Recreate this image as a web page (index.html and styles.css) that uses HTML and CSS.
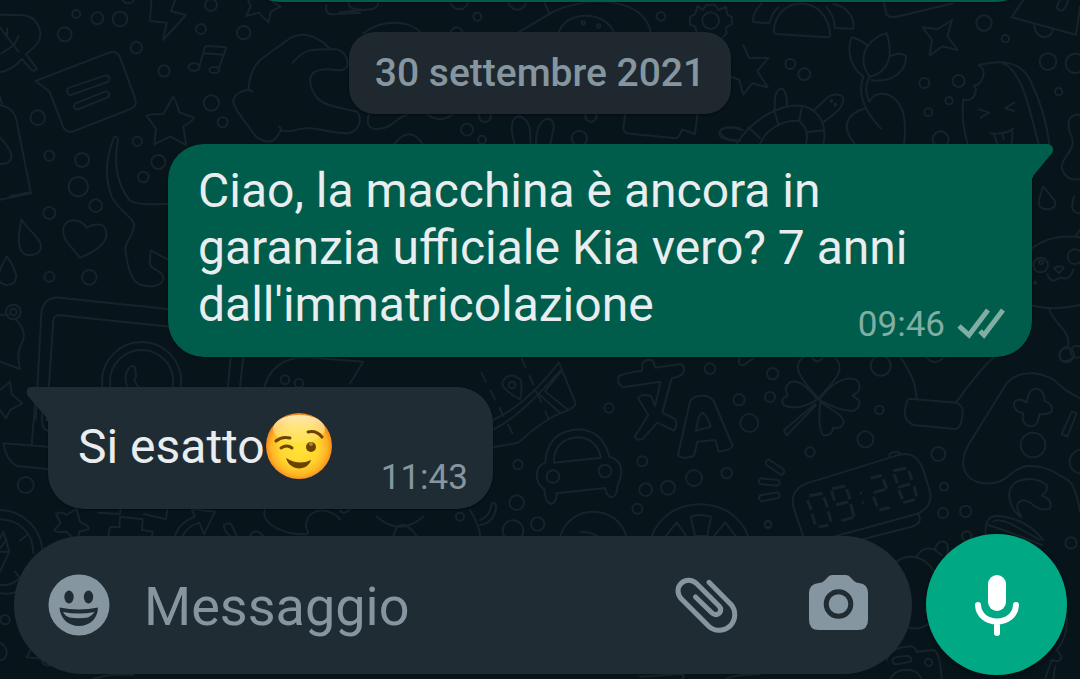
FILE: index.html
```html
<!DOCTYPE html>
<html lang="it">
<head>
    <meta charset="UTF-8">
    <meta name="viewport" content="width=device-width, initial-scale=1.0">
    <title>Chat</title>
    <link rel="stylesheet" href="styles.css">
</head>
<body>
    <!-- wallpaper doodles -->
    <svg class="wallpaper" viewBox="0 0 3240 2037" preserveAspectRatio="xMidYMid slice" aria-hidden="true">
        <!-- top left -->
        <g>
            <circle cx="229" cy="42" r="12"/><circle cx="292" cy="55" r="18"/><circle cx="360" cy="57" r="22"/>
            <circle cx="194" cy="103" r="21"/><circle cx="409" cy="143" r="17"/><circle cx="492" cy="213" r="17"/>
            <circle cx="603" cy="87" r="15"/><circle cx="633" cy="15" r="18"/><circle cx="731" cy="98" r="20"/>
            <circle cx="634" cy="309" r="23"/><circle cx="668" cy="367" r="15"/><circle cx="113" cy="353" r="22"/>
            <circle cx="148" cy="467" r="15"/><circle cx="246" cy="480" r="21"/><circle cx="412" cy="424" r="14"/>
            <circle cx="475" cy="486" r="21"/><circle cx="430" cy="531" r="16"/><circle cx="235" cy="560" r="29"/>
            <circle cx="385" cy="-10" r="20"/>
            <path d="M0 44L70 46C115 50 130 100 115 125C108 140 90 150 78 163L110 205Q103 218 93 208L66 177C50 195 30 212 0 216"/>
            <path d="M0 82L56 156M22 84L20 110M56 108L42 135L4 160"/>
            <path d="M106 243L330 157Q350 150 360 172L407 300Q410 318 392 327L220 394Q200 400 190 382L148 274Z"/>
            <path d="M208 263L314 227A9 9 0 0 1 322 246L216 284A9 9 0 0 1 208 263ZM227 310L314 275A9 9 0 0 1 322 293L236 327A9 9 0 0 1 227 310Z"/>
            <path d="M455 -10L450 63L500 68L489 120L558 45L513 34L529 -10"/>
            <path d="M598 200L614 143Q616 138 626 138L679 142L655 210M612 160L670 164"/>
            <ellipse cx="582" cy="201" rx="17" ry="11"/><ellipse cx="643" cy="210" rx="15" ry="9"/>
            <path d="M519 291Q524 290 538 337L580 352Q588 356 550 380L559 435L511 410L463 433L468 386L440 348Q440 342 490 342Z"/>
            <path d="M742 -5L752 18L739 48L776 38L806 68L812 35L842 20L810 0"/>
            <path d="M980 15Q972 44 1000 43L1080 38M1046 0Q1040 30 1080 28"/>
            <path d="M745 268C750 210 770 185 800 165L860 122C900 90 950 105 988 144M878 188C910 150 925 145 1010 148C1040 155 1050 195 1037 205C1010 222 990 195 945 215C920 230 930 270 955 297C975 317 1010 320 1070 335C1085 350 1085 385 1050 399C990 405 940 370 880 392L840 393M757 274C740 262 700 280 700 305C702 330 730 355 755 393C775 425 815 435 830 410C840 398 848 385 837 379"/>
            <path d="M0 316C30 320 48 340 52 375L93 580L0 599M0 412C25 440 40 460 32 480Q25 493 0 492M0 290L6 312M30 589L90 577"/>
            <path d="M342 412Q350 405 354 418C340 490 350 550 388 600C400 612 440 615 503 611M342 412C310 490 320 550 335 590C355 630 395 650 402 670C405 705 375 720 376 750C382 800 395 850 425 855C455 862 485 860 490 835C492 810 450 810 449 790L452 752L503 778"/>
        </g>
        <!-- left middle -->
        <g transform="translate(0 540)">
            <circle cx="148" cy="99" r="18"/><circle cx="287" cy="77" r="19"/><circle cx="148" cy="290" r="15"/><circle cx="268" cy="292" r="22"/>
            <path d="M64 118C50 190 55 225 90 226Q130 220 121 190C115 170 80 145 64 118ZM21 230C0 262 -8 290 0 306Q15 320 35 312Q50 305 48 285Q40 255 21 230Z"/>
            <path d="M240 233L200 185C180 150 190 122 222 121Q245 122 260 143Q285 128 310 137Q332 165 304 195Q280 218 240 233Z"/>
            <circle cx="40" cy="396" r="22"/><circle cx="40" cy="396" r="10"/>
            <path d="M0 404L24 404M46 418C80 450 75 475 60 500Q50 530 60 567L0 545"/>
            <path d="M107 720L124 400Q130 350 180 353L510 388M140 720L160 420Q162 405 180 406L510 440"/>
            <circle cx="425" cy="605" r="119"/><circle cx="425" cy="605" r="95"/>
            <path d="M380 575Q395 550 405 562L408 590Q395 600 420 625L455 660L440 680C405 665 365 620 380 575"/>
            <path d="M692 530L682 640M730 530L718 640M790 640C800 560 860 530 920 532L1090 545L1050 610"/>
            <circle cx="855" cy="599" r="13"/><circle cx="897" cy="610" r="13"/>
            <path d="M0 630L30 605L35 643L67 670L30 690L18 715L0 690"/>
            <path d="M107 650L95 795M10 790L144 800M10 790Q18 840 50 858L150 868M128 690Q120 750 145 752"/>
            <circle cx="77" cy="915" r="24"/>
        </g>
        <!-- behind the date chip -->
        <g transform="translate(1020 0)">
            <circle cx="412" cy="50" r="12"/><circle cx="963" cy="49" r="13"/><circle cx="381" cy="389" r="18"/><circle cx="426" cy="419" r="12"/>
            <circle cx="718" cy="415" r="23"/><circle cx="435" cy="348" r="18"/><circle cx="753" cy="348" r="17"/><circle cx="532" cy="2" r="27"/>
            <circle cx="358" cy="0" r="28"/><circle cx="350" cy="100" r="18"/>
            <path d="M0 37L100 27Q118 18 115 0M70 100C120 60 205 55 245 100M530 100L640 35C760 -20 920 0 932 100M610 0L628 40M655 100C675 30 800 30 822 100"/>
            <circle cx="730" cy="68" r="5"/><circle cx="776" cy="78" r="5"/>
            <circle cx="1112" cy="62" r="25"/>
            <path d="M1072 18L1088 30L1100 14L1124 14L1136 30L1158 20L1162 44L1176 52V72L1158 82L1160 100L1148 112M1072 18L1066 42L1050 50V74L1066 80L1070 100"/>
            <path d="M86 345Q75 385 110 388C160 385 170 350 200 345M160 435Q210 370 250 435M265 345Q300 370 335 345M525 435C490 330 560 330 570 390L572 435M588 435C585 340 650 340 640 390L630 435"/>
            <path d="M855 345L850 385Q852 400 870 401L1008 415Q1020 410 1026 388L1065 402L1072 345M1200 385Q1150 375 1140 395Q1145 420 1200 422"/>
        </g>
        <!-- top right -->
        <g transform="translate(2100 0)">
            <circle cx="271" cy="192" r="15"/><circle cx="313" cy="223" r="18"/><circle cx="673" cy="249" r="15"/><circle cx="776" cy="243" r="18"/>
            <circle cx="747" cy="302" r="11"/><circle cx="685" cy="337" r="12"/><circle cx="722" cy="418" r="24"/><circle cx="852" cy="69" r="23"/>
            <circle cx="916" cy="116" r="11"/><circle cx="1044" cy="185" r="25"/><circle cx="1126" cy="190" r="29"/><circle cx="1076" cy="275" r="11"/>
            <path d="M221 98C225 -20 385 -20 391 108Q390 112 370 111L228 102ZM185 10Q155 40 160 66L208 70Q215 40 235 22M378 20Q405 50 404 84L460 86C465 50 440 20 400 12"/>
            <path d="M550 0L560 45Q570 55 600 48L760 10"/>
            <path d="M668 82L712 88L756 60L742 108L773 150L727 139L689 166L696 120Z"/>
            <path d="M130 135L148 175L206 173L172 213L203 262L156 250L130 284L118 240L92 230"/>
            <path d="M490 230C450 200 440 150 455 112Q485 120 503 138Q530 105 560 100C580 160 570 215 510 230C485 200 485 165 503 138M572 168Q600 155 618 168C620 210 580 250 515 240"/>
            <path d="M490 230C475 270 480 320 543 386M510 230C490 260 500 285 508 305C530 260 600 280 612 350Q618 395 612 432M497 325C440 340 420 380 465 432"/>
            <path d="M110 432C160 350 250 310 310 318C370 335 380 390 370 432M180 432C200 385 250 360 295 362Q330 385 318 432M145 382L180 415M222 330L234 370M306 320L298 362M324 396L372 391M225 328C220 280 235 260 250 268Q263 285 260 318M340 332L385 290Q420 275 430 295C430 330 395 345 368 368M128 390C80 375 50 385 60 408Q80 425 115 422"/>
            <circle cx="394" cy="303" r="3"/><circle cx="406" cy="314" r="3"/>
            <path d="M836 195C900 180 960 180 990 240Q1035 330 1048 432M905 188C970 210 990 340 1016 432M836 195Q860 210 845 240Q835 258 822 256Q835 275 818 294Q805 305 790 298Q782 360 803 432"/>
            <path d="M836 328L868 338L842 353M943 308L915 325L943 333M870 400Q915 405 940 386M882 404L892 432M936 392Q940 420 932 432M908 404L912 418"/>
            <path d="M970 0L935 52L1128 104L1140 20M1003 75Q1005 110 1035 112Q1055 108 1058 92M1080 0Q1060 30 1085 32Q1100 25 1104 0"/>
            <path d="M1140 345C1100 340 1100 380 1115 410C1130 450 1085 470 1085 500Q1095 545 1140 537"/>
            <path d="M1030 560C1010 610 1010 625 1040 628Q1075 625 1063 600ZM1122 590Q1105 640 1140 640"/>
        </g>
        <!-- bear, right edge -->
        <g transform="translate(2520 390)">
            <path d="M570 360Q630 310 720 322M705 320L720 300M570 525Q640 545 720 525M628 540C650 590 690 600 685 648Q650 660 662 690Q685 700 700 680M622 433Q635 465 660 442Q690 455 700 418M642 415Q655 405 672 412L657 430Z"/>
            <circle cx="602" cy="405" r="22"/><circle cx="705" cy="380" r="22"/><circle cx="603" cy="397" r="6"/><circle cx="586" cy="458" r="3"/><circle cx="710" cy="665" r="18"/>
        </g>
        <!-- map, car, translate -->
        <g transform="translate(1440 1050)">
            <circle cx="387" cy="174" r="14"/><circle cx="690" cy="56" r="16"/><circle cx="777" cy="149" r="17"/><circle cx="808" cy="219" r="27"/>
            <circle cx="487" cy="334" r="15"/><circle cx="740" cy="369" r="16"/><circle cx="642" cy="384" r="24"/><circle cx="564" cy="413" r="21"/>
            <circle cx="497" cy="419" r="19"/><circle cx="472" cy="476" r="15"/><circle cx="114" cy="344" r="14"/><circle cx="110" cy="458" r="22"/>
            <circle cx="173" cy="522" r="20"/><circle cx="99" cy="542" r="31"/><circle cx="864" cy="522" r="10"/>
            <path d="M38 210C110 180 180 110 237 38L287 160Q285 175 240 190Q190 210 115 278L38 292M38 240C110 205 190 120 240 62M165 122L240 188M195 124L265 180M195 124L245 62"/>
            <path class="dashed" d="M5 70L110 275M125 25L205 205"/>
            <path d="M120 148Q60 115 68 95Q90 60 122 90Q128 120 120 148Z"/><circle cx="96" cy="105" r="10"/>
            <path d="M486 62L488 38Q505 22 520 34L526 53L600 42Q615 45 612 62Q610 80 575 85L547 188L585 207Q595 220 582 242L532 218L490 265Q470 275 464 260L505 195L474 145Q480 130 512 137L525 168L542 95L430 112Q412 105 415 80Q425 70 486 62Z"/>
            <path d="M594 315L630 155Q640 135 680 138Q700 145 705 162L758 288Q755 300 716 305L706 270L652 275L642 318Q605 330 594 315ZM648 242Q655 190 668 188Q680 195 692 230Z"/>
            <path d="M196 338C200 270 240 240 300 238Q370 245 388 320C430 330 430 370 413 405Q410 442 395 442Q380 440 375 414L230 430Q230 460 212 462Q195 455 193 418C165 400 160 350 196 338ZM222 338C220 280 260 262 300 262Q350 268 363 323Z"/>
            <circle cx="219" cy="380" r="19"/><circle cx="375" cy="363" r="19"/>
            <path d="M240 560C270 460 410 460 440 560M303 545L330 548L360 562M515 560C560 430 760 430 805 560M632 500Q660 490 693 500L682 558H645ZM556 560L590 517L620 560M700 560L736 517L768 560M0 510Q30 500 35 460Q50 455 48 475Q40 520 0 525"/>
            <path d="M866 328L910 357Q918 368 904 375L860 345Q852 333 866 328ZM842 385L895 390Q905 400 892 407L842 402Q830 395 842 385ZM840 436L893 427Q904 435 895 444L845 454Q832 448 840 436ZM780 22Q770 45 790 46L820 25"/>
        </g>
        <!-- clover, clock, gamepad -->
        <g transform="translate(2340 1050)">
            <circle cx="302" cy="47" r="30"/><circle cx="298" cy="180" r="13"/><circle cx="256" cy="268" r="24"/><circle cx="90" cy="306" r="14"/>
            <circle cx="475" cy="312" r="21"/><circle cx="492" cy="410" r="12"/><circle cx="489" cy="489" r="15"/><circle cx="557" cy="484" r="17"/>
            <circle cx="560" cy="558" r="14"/><circle cx="-22" cy="71" r="17"/><circle cx="-30" cy="141" r="15"/><circle cx="860" cy="15" r="22"/>
            <path d="M115 145C70 95 30 50 70 22M115 145C165 90 200 60 165 22M95 22Q110 45 130 22M112 148C70 90 30 80 17 115Q20 130 22 138Q0 145 10 165C40 180 80 170 112 148ZM118 150C150 100 200 75 230 90Q245 105 235 125L218 137L238 152Q240 180 215 183C180 182 150 165 118 150ZM120 155C170 190 195 200 190 220Q180 240 160 232Q155 260 130 255C115 240 118 200 120 155ZM105 162L12 240L20 256L108 165"/>
            <path d="M362 22C400 80 405 100 410 146M640 22Q590 70 528 158M388 146L528 158Q550 165 548 190Q545 235 525 237L400 225Q370 210 375 185Q378 150 388 146ZM440 22Q465 50 490 22"/>
            <path d="M680 100C720 55 800 60 850 115Q870 130 900 145M680 100L565 285C530 350 560 395 610 400C690 405 680 360 740 348C800 345 830 370 870 395Q890 420 900 485"/>
            <path d="M740 158Q745 115 770 116Q795 120 793 152Q820 160 815 185Q800 195 778 192Q775 230 750 229Q722 222 730 190Q700 185 702 158Q715 140 740 158ZM875 185L890 190L862 260L845 252Z"/>
            <circle cx="759" cy="285" r="37"/><circle cx="905" cy="335" r="36"/>
            <path d="M70 560L40 470Q30 420 80 400L340 320C390 300 415 320 430 360L450 425Q460 470 410 492L160 560M328 320Q325 305 355 306L362 314M415 492Q430 520 395 530L240 570"/>
            <path class="digits" d="M88 437L128 430M82 450L94 480M132 442L142 472M96 492L106 524M145 484L153 515M115 532L145 525M156 416L195 408M154 422L164 452M200 418L210 448M168 464L205 456M212 462L222 500M185 512L220 502M272 384L306 376M310 388L320 416M280 428L316 418M280 440L292 470M298 480L330 472M340 362L378 354M342 372L352 400M386 362L396 390M354 412L390 402M356 420L368 448M402 408L410 440M370 458L405 448M240 428L246 430M246 456L252 458"/>
            <path d="M725 502C690 480 670 420 710 395Q760 375 800 405Q805 425 785 436Q820 450 810 475Q785 485 760 465Q730 440 714 460Q705 470 725 502ZM618 560Q610 500 650 497Q740 505 790 570M640 515Q650 505 690 520L780 570"/>
        </g>
        <!-- strip above and below the composer -->
        <g transform="translate(0 1500)">
            <circle cx="15" cy="359" r="14"/>
            <path d="M0 30C60 30 130 80 128 170M0 58C60 60 100 100 100 160M60 122L80 106M45 215L60 235M0 280Q50 285 70 262M0 255Q40 258 60 232M10 95L0 115M10 95L28 155L0 215M0 155H28M0 145L20 118M0 428Q22 440 20 462Q15 480 0 481M95 445L80 472L170 480M125 480Q130 500 150 496"/>
            <path d="M168 42Q185 32 200 45L230 27L240 66Q270 78 265 88L238 95L235 110M168 42L182 68L163 90Q165 98 200 95L215 110"/>
            <path d="M295 38L360 42L362 27M325 108L330 80L358 82L360 50L428 58L426 90L458 95L456 108M432 42L498 58L502 27M525 108Q535 70 585 50L575 28L645 35L612 103L598 68Q560 80 548 108M672 75Q685 65 695 75L710 108M672 75Q670 90 690 108M750 108Q765 80 790 108M795 27C780 70 850 105 920 103M1020 58C990 20 920 20 918 80L925 100M280 537Q330 520 400 525"/>
            <path d="M1130 50Q1200 110 1270 50M1180 108Q1200 40 1250 108M1020 30Q1030 50 1060 20M1410 30Q1440 80 1440 108"/>
            <circle cx="1380" cy="50" r="12"/>
        </g>
        <g transform="translate(1920 1560)">
            <circle cx="384" cy="14" r="10"/><circle cx="980" cy="48" r="14"/><circle cx="1293" cy="69" r="17"/><circle cx="866" cy="427" r="11"/>
            <path d="M770 125C800 100 850 105 880 150M830 110Q850 75 885 90L905 105M885 90Q890 60 915 65Q930 80 920 105M800 320Q830 335 870 310M1280 290Q1285 350 1250 390L1265 410Q1262 430 1235 420L1215 477M740 420Q750 385 800 380Q825 375 830 395L880 390Q900 395 905 477M758 425Q755 412 775 410L805 407Q818 415 812 425L775 432Q760 435 758 425ZM750 477C770 440 830 440 845 477M0 470L120 462Q140 465 125 477M260 477Q270 465 360 463"/>
            <path d="M1045 15Q1150 50 1205 75M1240 477L1245 440"/>
        </g>
    </svg>

    <div class="chat">
        <main class="messages">
            <div class="bubble sent previous"></div>
            <div class="date">30 settembre 2021</div>
            <article class="bubble sent first">
                <svg class="tail" width="22" height="34" viewBox="0 0 22 34" aria-hidden="true"><path d="M0 0H15C20 0 23 5 20 9L1 32V34H0Z"/></svg>
                <span class="text">Ciao, la macchina è ancora in garanzia ufficiale Kia vero? 7 anni dall'immatricolazione</span>
                <span class="meta">
                    <time>09:46</time>
                    <svg class="checks" width="52" height="36" viewBox="0 0 52 36" role="img" aria-label="Consegnato">
                        <path d="M3 19L13 28L32 3M24 24L28 28L47 3"/>
                    </svg>
                </span>
            </article>
            <article class="bubble received">
                <svg class="tail" width="22" height="34" viewBox="0 0 22 34" aria-hidden="true"><path d="M22 0H5C0 0 0 6 2 9L21 31V34H22Z"/></svg>
                <span class="text">Si esatto<svg class="emoji" width="68" height="68" viewBox="0 0 68 68" role="img" aria-label="Occhiolino">
                        <defs>
                            <radialGradient id="face" cx="50%" cy="52%" r="50%">
                                <stop offset="0" stop-color="#ffe43a"/>
                                <stop offset="0.6" stop-color="#ffd52e"/>
                                <stop offset="0.85" stop-color="#ffb325"/>
                                <stop offset="1" stop-color="#f58a1c"/>
                            </radialGradient>
                            <linearGradient id="shine" x1="0" y1="0" x2="0" y2="1">
                                <stop offset="0" stop-color="#fff3c4" stop-opacity="0.9"/>
                                <stop offset="1" stop-color="#ffe97a" stop-opacity="0.35"/>
                            </linearGradient>
                        </defs>
                        <circle cx="34" cy="34" r="33" fill="url(#face)"/>
                        <ellipse cx="34" cy="17" rx="26" ry="14" fill="url(#shine)"/>
                        <g fill="none" stroke="#6b4200" stroke-linecap="round">
                            <path d="M11 29Q17 24 25 26" stroke-width="3"/>
                            <path d="M43 20Q51 18 57 25" stroke-width="3"/>
                            <path d="M16 36Q22 32 27 36" stroke-width="3"/>
                        </g>
                        <path d="M21 46Q34 54 46 48C43 59 25 60 21 46Z" fill="#6b4200"/>
                        <ellipse cx="46" cy="35" rx="5" ry="5" fill="#6b4200"/>
                        <circle cx="46" cy="32" r="2" fill="#a98240"/>
                    </svg></span>
                <span class="meta"><time>11:43</time></span>
            </article>
        </main>

        <form class="composer">
            <div class="field">
                <button type="button" class="icon" aria-label="Emoji">
                    <svg width="62" height="62" viewBox="0 0 62 62">
                        <circle cx="31" cy="31" r="30.5" fill="#8696a0"/>
                        <g fill="#202c33">
                            <ellipse cx="21" cy="23" rx="4.7" ry="6.4"/>
                            <ellipse cx="40.5" cy="23" rx="4.7" ry="6.4"/>
                            <path d="M11.500 33.500Q31 37.500 50 33.500C50 44 42 52 31 52C20 52 12 44 11.500 33.500Z"/>
                        </g>
                        <path d="M15 38Q31 41 46.500 38Q44 42 40 43.500Q31 45 21.500 43.500Q17 42 15 38Z" fill="#8696a0"/>
                    </svg>
                </button>
                <input type="text" placeholder="Messaggio" aria-label="Messaggio">
                <button type="button" class="icon attach" aria-label="Allega">
                    <svg width="64" height="64" viewBox="0 0 64 64" fill="none" stroke="#8696a0" stroke-width="5" stroke-linecap="round" stroke-linejoin="round">
                        <path d="M34 9.3L56 31.500C61 37 61 46 56 52C50 58.500 40 59 34 53.500L6 25.500C2 21 2 14.500 6 10.500C10 6 17 6 21.500 10.500L44 33C46.500 35.500 46 38 44.500 40C42 42 39 42 36.500 39.500L20.500 24"/>
                    </svg>
                </button>
                <button type="button" class="icon" aria-label="Fotocamera">
                    <svg width="60" height="60" viewBox="0 2 60 60">
                        <path d="M23 2H37Q40 2 42 5L45 8Q47 10 50 10Q59 11 59 20V47Q59 57 49 57H10Q0 57 0 47V20Q0 11 10 10Q13 10 15 8L18 5Q20 2 23 2Z" fill="#8696a0"/>
                        <circle cx="29.500" cy="31" r="12.300" fill="#8696a0" stroke="#202c33" stroke-width="5"/>
                    </svg>
                </button>
            </div>
            <button type="button" class="mic" aria-label="Messaggio vocale">
                <svg width="60" height="64" viewBox="0 0 60 64" fill="none" stroke="#fff">
                    <rect x="21" y="2" width="18" height="36" rx="9" fill="#fff" stroke="none"/>
                    <path d="M11 32C12 54 48 54 49 32M30 49V60" stroke-width="6" stroke-linecap="round"/>
                </svg>
            </button>
        </form>
    </div>
</body>
</html>
```
FILE: styles.css
```css
* {
    box-sizing: border-box;
}
body {
    margin: 0;
    font-family: Roboto, sans-serif;
    background-color: #07141a;
    color: #e9edef;
}
.wallpaper {
    position: absolute;
    top: 0;
    left: 0;
    width: 100%;
    height: 100%;
    fill: none;
    stroke: #17232a;
    stroke-width: 6;
    stroke-linejoin: round;
    stroke-linecap: round;
}
.wallpaper .dashed {
    stroke-dasharray: 28 30;
}
.wallpaper .digits {
    stroke-width: 9;
    stroke-linecap: butt;
}
.chat {
    position: relative;
    display: flex;
    flex-direction: column;
    height: 100vh;
    overflow: hidden;
}
.messages {
    flex: 1;
    min-height: 0;
    display: flex;
    flex-direction: column;
    justify-content: flex-end;
    align-items: flex-start;
    gap: 30px;
    padding: 0 48px 25px;
}
.date {
    flex-shrink: 0;
    align-self: center;
    padding: 18px 26px;
    border-radius: 26px;
    background-color: #1e282e;
    box-shadow: 0 1px 2px rgba(0, 0, 0, 0.4);
    color: #8696a0;
    font-size: 39px;
    font-weight: 500;
    line-height: 46px;
}
.bubble {
    position: relative;
    display: flow-root;
    flex-shrink: 0;
    max-width: 80vw;
    padding: 18px 24px 24px 30px;
    border-radius: 36px;
    box-shadow: 0 1px 2px rgba(0, 0, 0, 0.4);
    font-size: 48px;
    line-height: 57px;
}
.sent {
    align-self: flex-end;
    background-color: #005d4b;
}
.first {
    border-top-right-radius: 0;
}
.previous {
    width: 73vw;
    min-height: 120px;
}
.received {
    padding: 31px 25px 34px 30px;
    border-top-left-radius: 0;
    background-color: #202c33;
}
.tail {
    position: absolute;
    top: 0;
}
.sent .tail {
    left: 100%;
    fill: #005d4b;
}
.received .tail {
    right: 100%;
    fill: #202c33;
}
.meta {
    float: right;
    display: flex;
    align-items: center;
    gap: 11px;
    margin: 28px 0 -24px 48px;
    color: #8696a0;
    font-size: 35px;
    line-height: 42px;
}
.sent .meta {
    color: #80aea5;
}
.received .meta {
    margin-top: 39px;
}
.checks {
    fill: none;
    stroke: #80aea5;
    stroke-width: 5;
}
.emoji {
    margin: -12px 0;
    vertical-align: -5px;
}
.composer {
    display: flex;
    align-items: center;
    gap: 14px;
    padding: 0 13px 4px 14px;
}
.field {
    flex: 1;
    min-width: 0;
    display: flex;
    align-items: center;
    height: 138px;
    padding: 0 43px 0 34px;
    border-radius: 69px;
    background-color: #202c33;
}
.field input {
    flex: 1;
    min-width: 0;
    margin: 0;
    padding: 4px 0 0 34px;
    border: none;
    outline: none;
    background: none;
    color: #e9edef;
    font: 54px/64px Roboto, sans-serif;
}
.field input::placeholder {
    color: #8696a0;
    opacity: 1;
}
button {
    display: block;
    padding: 0;
    border: none;
    background: none;
    cursor: pointer;
}
button svg {
    display: block;
}
.attach {
    margin-right: 70px;
}
.mic {
    display: flex;
    align-items: center;
    justify-content: center;
    width: 141px;
    height: 141px;
    border-radius: 50%;
    background-color: #00a884;
    box-shadow: 0 2px 4px rgba(0, 0, 0, 0.4);
}
```
